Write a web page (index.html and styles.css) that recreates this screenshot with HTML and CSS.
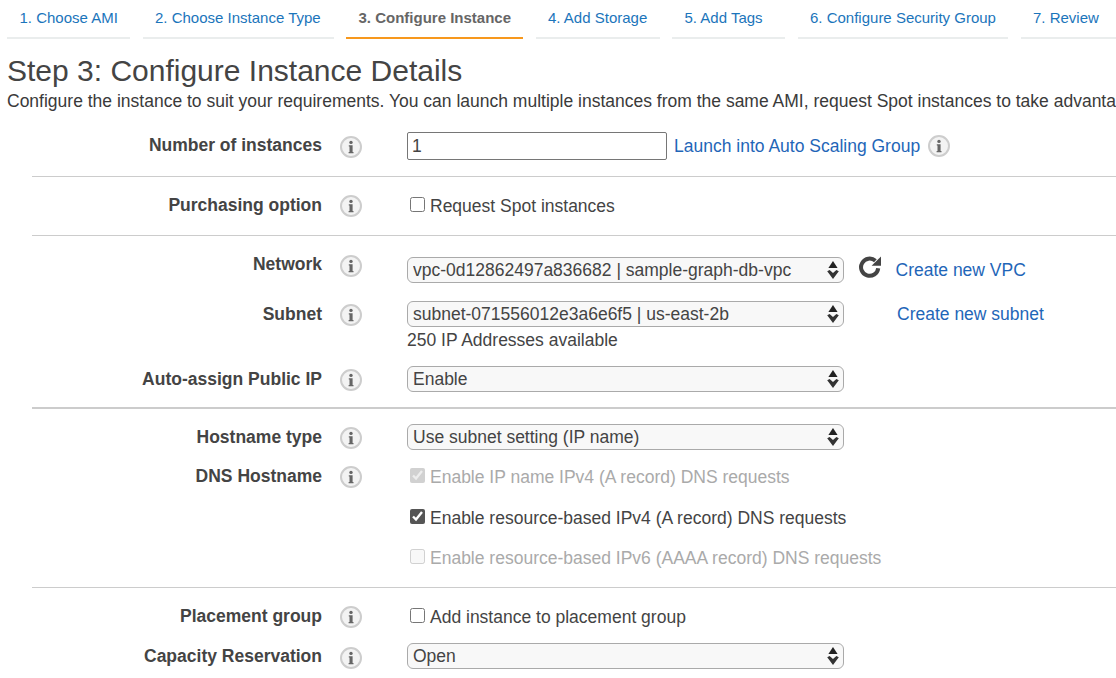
FILE: index.html
```html
<!DOCTYPE html>
<html lang="en">
<head>
<meta charset="utf-8">
<title>Step 3: Configure Instance Details</title>
<link rel="stylesheet" href="styles.css">
</head>
<body>
<svg class="defs" width="0" height="0" aria-hidden="true">
  <symbol id="info" viewBox="0 0 22 22">
    <circle cx="11" cy="11" r="10" fill="#f3f3f3" stroke="#cdcdcd" stroke-width="2"/>
    <circle cx="11" cy="6.4" r="1.7" fill="#666"/>
    <path d="M8.8 9.2h3.8v6.8h.9v1.2H8.6V16h.9v-5.6h-.7z" fill="#666"/>
  </symbol>
  <symbol id="updown" viewBox="0 0 12 18">
    <path d="M6 0l4.6 7H1.4z" fill="#222"/>
    <path d="M.2 10.2l2.4-1.2 3.4 3 3.4-3 2.4 1.2L6 18z" fill="#333"/>
  </symbol>
</svg>
<nav class="tabs">
  <a class="tab t1">1. Choose AMI</a>
  <a class="tab t2">2. Choose Instance Type</a>
  <a class="tab t3 active">3. Configure Instance</a>
  <a class="tab t4">4. Add Storage</a>
  <a class="tab t5">5. Add Tags</a>
  <a class="tab t6">6. Configure Security Group</a>
  <a class="tab t7">7. Review</a>
</nav>
<h1>Step 3: Configure Instance Details</h1>
<p class="intro">Configure the instance to suit your requirements. You can launch multiple instances from the same AMI, request Spot instances to take advantage of the lower pricing, assign an access management role to the instance, and more.</p>
<main class="form">
  <section class="sec sec-a">
    <div class="row row-num">
      <label class="lbl">Number of instances</label>
      <svg class="info"><use href="#info"/></svg>
      <div class="ctl ctl-inline">
        <input class="num" type="text" value="1">
        <a class="link">Launch into Auto Scaling Group</a>
        <svg class="info info-link"><use href="#info"/></svg>
      </div>
    </div>
  </section>
  <section class="sec sec-b">
    <div class="row">
      <label class="lbl">Purchasing option</label>
      <svg class="info"><use href="#info"/></svg>
      <div class="ctl"><label class="chk"><input type="checkbox">Request Spot instances</label></div>
    </div>
  </section>
  <section class="sec sec-c">
    <div class="row row-net">
      <label class="lbl">Network</label>
      <svg class="info"><use href="#info"/></svg>
      <div class="ctl ctl-inline ctl-net">
        <div class="sel"><select><option>vpc-0d12862497a836682 | sample-graph-db-vpc</option></select><svg class="arrows"><use href="#updown"/></svg></div>
        <svg class="refresh" viewBox="0 0 24 24"><path d="M20.2 13.2A8.6 8.6 0 1 1 17.4 5.8" fill="none" stroke="#444" stroke-width="4"/><path d="M23 1.4v9.4h-9.4z" fill="#444"/></svg>
        <a class="link link-vpc">Create new VPC</a>
      </div>
    </div>
    <div class="row row-sub row-sel">
      <label class="lbl">Subnet</label>
      <svg class="info"><use href="#info"/></svg>
      <div class="ctl ctl-inline">
        <div class="sel"><select><option>subnet-071556012e3a6e6f5 | us-east-2b</option></select><svg class="arrows"><use href="#updown"/></svg></div>
        <a class="link link-sub">Create new subnet</a>
      </div>
    </div>
    <div class="hint">250 IP Addresses available</div>
    <div class="row row-auto row-sel">
      <label class="lbl">Auto-assign Public IP</label>
      <svg class="info"><use href="#info"/></svg>
      <div class="ctl"><div class="sel"><select><option>Enable</option></select><svg class="arrows"><use href="#updown"/></svg></div></div>
    </div>
  </section>
  <section class="sec sec-d">
    <div class="row row-sel">
      <label class="lbl">Hostname type</label>
      <svg class="info"><use href="#info"/></svg>
      <div class="ctl"><div class="sel"><select><option>Use subnet setting (IP name)</option></select><svg class="arrows"><use href="#updown"/></svg></div></div>
    </div>
    <div class="row row-dns">
      <label class="lbl">DNS Hostname</label>
      <svg class="info"><use href="#info"/></svg>
      <div class="ctl"><label class="chk off"><input type="checkbox" checked disabled>Enable IP name IPv4 (A record) DNS requests</label></div>
    </div>
    <div class="row row-opt row-opt-first">
      <div class="ctl ctl-only"><label class="chk"><input class="dark" type="checkbox" checked>Enable resource-based IPv4 (A record) DNS requests</label></div>
    </div>
    <div class="row row-opt">
      <div class="ctl ctl-only"><label class="chk off"><input type="checkbox" disabled>Enable resource-based IPv6 (AAAA record) DNS requests</label></div>
    </div>
  </section>
  <section class="sec sec-e">
    <div class="row">
      <label class="lbl">Placement group</label>
      <svg class="info"><use href="#info"/></svg>
      <div class="ctl"><label class="chk"><input type="checkbox">Add instance to placement group</label></div>
    </div>
    <div class="row row-cap row-sel">
      <label class="lbl">Capacity Reservation</label>
      <svg class="info"><use href="#info"/></svg>
      <div class="ctl"><div class="sel"><select><option>Open</option></select><svg class="arrows"><use href="#updown"/></svg></div></div>
    </div>
  </section>
</main>
</body>
</html>
```
FILE: styles.css
```css
* { box-sizing: border-box; }
html, body { margin: 0; height: 100%; }
body {
  width: 1116px;
  height: 678px;
  overflow: hidden;
  background: #fff;
  color: #444;
  font-family: "Liberation Sans", Arial, sans-serif;
  font-size: 17.5px;
  line-height: 24px;
}
.defs { position: absolute; }

.tabs { display: flex; gap: 12.5px; padding: 0 0 0 7px; height: 39px; }
.tab {
  height: 39px;
  flex: none;
  padding: 7px 0 0 12.5px;
  border-bottom: 2px solid #eaeded;
  color: #1b75bb;
  font-size: 15px;
  line-height: 22px;
  white-space: nowrap;
}
.t1 { width: 123px; }
.t2 { width: 191px; }
.t3 { width: 177px; }
.t4 { width: 124px; }
.t5 { width: 113px; }
.t6 { width: 210.5px; }
.t7 { width: 110px; }
.tab.active { border-bottom-color: #f7981d; color: #666; font-weight: 700; }

h1 {
  margin: 14px 0 0 7px;
  font-size: 30px;
  font-weight: 400;
  line-height: 36px;
  color: #444;
}
.intro {
  margin: 1px 0 0 7px;
  font-size: 17.5px;
  line-height: 22px;
  white-space: nowrap;
  overflow: hidden;
  color: #3a3a3a;
}

.form { margin: 20px 0 0 32px; }
.sec { border-bottom: 1px solid #ccc; }
.sec-a { padding-bottom: 16px; }
.sec-b { padding: 16px 0; }
.sec-c { padding: 16px 0 15px; border-bottom: 2px solid #ccc; }
.sec-d { padding: 15px 0 0; height: 179px; }
.sec-e { padding: 16px 0 0; border-bottom: 0; }

.row {
  display: grid;
  grid-template-columns: 290px 22px 1fr;
  column-gap: 18px;
  align-items: center;
  min-height: 26px;
}
.lbl {
  font-size: 17.5px;
  font-weight: 700;
  text-align: right;
  color: #444;
  padding-bottom: 2px;
}
.info { width: 22px; height: 22px; display: block; }
.row-sel .lbl { padding-bottom: 0; }
.row-sel > .info, .row-num > .info { margin-top: 2px; }
.row-cap > .info { margin-top: 4px; }
.ctl { margin-left: 27px; min-width: 0; }
.ctl-inline { display: flex; align-items: center; }

.num {
  width: 260px;
  height: 28px;
  padding: 0 4px;
  border: 1px solid #767676;
  border-radius: 2px;
  font: 17.5px "Liberation Sans", Arial, sans-serif;
  color: #444;
}
.link { color: #1f66b8; white-space: nowrap; }
.ctl-inline > .link { margin-left: 7px; }
.info-link { margin-left: 8px; }

.chk { display: flex; align-items: center; white-space: nowrap; color: #444; }
.chk input { width: 15px; height: 15px; margin: 0 5px 3px 3px; flex: none; }
.chk input.dark { accent-color: #555; }
.chk.off { color: #aaa; }

.sel { position: relative; width: 437px; height: 26px; flex: none; }
.sel select {
  appearance: none;
  display: block;
  width: 100%;
  height: 100%;
  padding: 0 24px 0 5px;
  border: 1px solid #aaa;
  border-radius: 6px;
  background: #f8f8f8;
  font: 17.5px "Liberation Sans", Arial, sans-serif;
  color: #444;
}
.arrows { position: absolute; right: 5px; top: 4px; width: 12px; height: 18px; pointer-events: none; }

.row-net { align-items: start; }
.row-net .info { margin-top: 3px; }
.ctl-net { margin-top: 5px; }
.refresh { width: 24px; height: 24px; margin: -6px 0 0 14px; flex: none; }
.ctl-inline > .link-vpc { margin-left: 13.5px; }
.ctl-inline > .link-sub { margin-left: 53px; }
.row-sub { margin-top: 18px; }
.hint { margin: 1px 0 0 375px; }
.row-auto { margin-top: 14px; }
.row-dns { margin-top: 14px; }
.row-opt { display: block; margin-top: 14px; }
.row-opt-first { margin-top: 16px; }
.ctl-only { margin-left: 375px; }
.row-cap { margin-top: 13px; }
```
